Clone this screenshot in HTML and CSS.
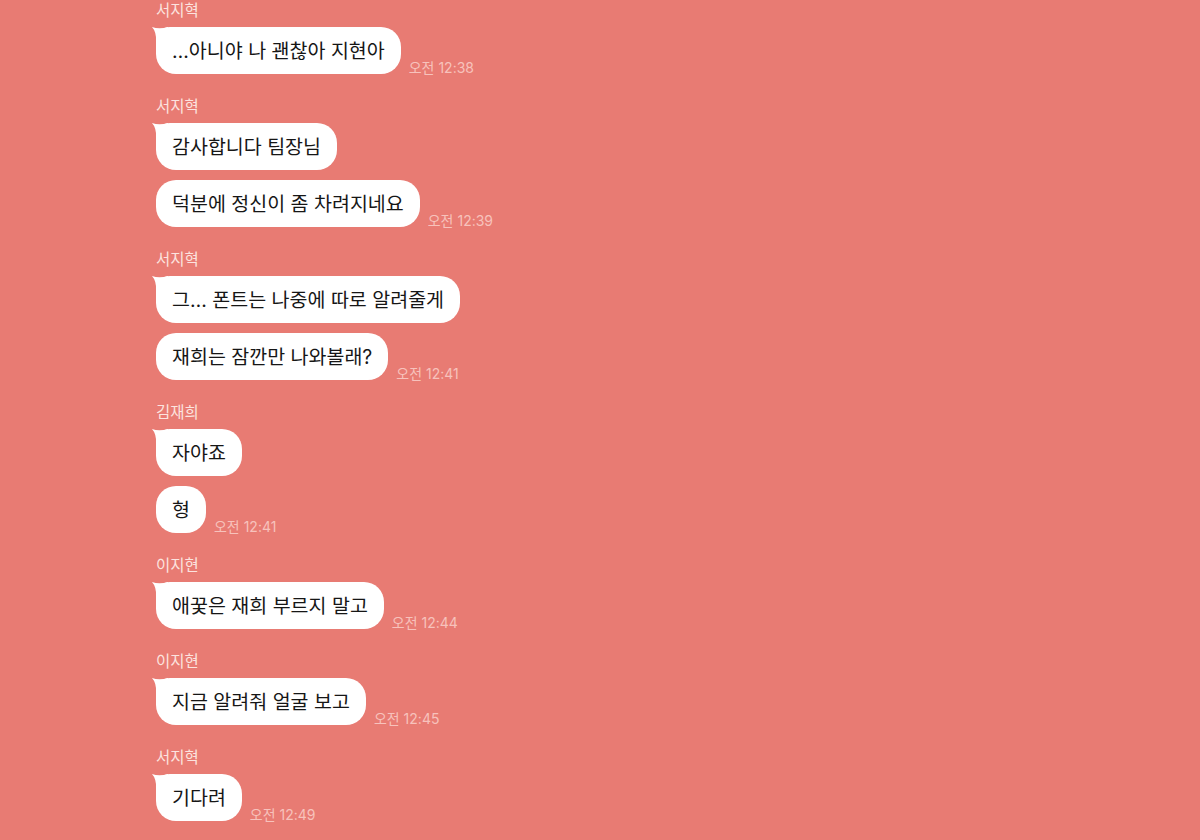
FILE: index.html
```html
<!DOCTYPE html>
<html lang="ko">
<head>
    <meta charset="UTF-8">
    <title>채팅</title>
    <link rel="stylesheet" href="styles.css">
</head>
<body>
    <div class="chat">

        <!-- 서지혁 -->
        <div class="group">
            <div class="name">서지혁</div>
            <div class="row">
                <div class="bubble first">…아니야 나 괜찮아 지현아<svg class="tail" viewBox="0 0 16 14"><path d="M0,0 Q7,2.5 16,0 L16,14 L4,14 Q4.5,5 0,0 Z"/></svg></div>
                <span class="time">오전 12:38</span>
            </div>
        </div>

        <div class="group">
            <div class="name">서지혁</div>
            <div class="row">
                <div class="bubble first">감사합니다 팀장님<svg class="tail" viewBox="0 0 16 14"><path d="M0,0 Q7,2.5 16,0 L16,14 L4,14 Q4.5,5 0,0 Z"/></svg></div>
            </div>
            <div class="row">
                <div class="bubble">덕분에 정신이 좀 차려지네요</div>
                <span class="time">오전 12:39</span>
            </div>
        </div>

        <div class="group">
            <div class="name">서지혁</div>
            <div class="row">
                <div class="bubble first">그… 폰트는 나중에 따로 알려줄게<svg class="tail" viewBox="0 0 16 14"><path d="M0,0 Q7,2.5 16,0 L16,14 L4,14 Q4.5,5 0,0 Z"/></svg></div>
            </div>
            <div class="row">
                <div class="bubble">재희는 잠깐만 나와볼래?</div>
                <span class="time">오전 12:41</span>
            </div>
        </div>

        <!-- 김재희 -->
        <div class="group">
            <div class="name">김재희</div>
            <div class="row">
                <div class="bubble first">자야죠<svg class="tail" viewBox="0 0 16 14"><path d="M0,0 Q7,2.5 16,0 L16,14 L4,14 Q4.5,5 0,0 Z"/></svg></div>
            </div>
            <div class="row">
                <div class="bubble">형</div>
                <span class="time">오전 12:41</span>
            </div>
        </div>

        <!-- 이지현 -->
        <div class="group">
            <div class="name">이지현</div>
            <div class="row">
                <div class="bubble first">애꿎은 재희 부르지 말고<svg class="tail" viewBox="0 0 16 14"><path d="M0,0 Q7,2.5 16,0 L16,14 L4,14 Q4.5,5 0,0 Z"/></svg></div>
                <span class="time">오전 12:44</span>
            </div>
        </div>

        <div class="group">
            <div class="name">이지현</div>
            <div class="row">
                <div class="bubble first">지금 알려줘 얼굴 보고<svg class="tail" viewBox="0 0 16 14"><path d="M0,0 Q7,2.5 16,0 L16,14 L4,14 Q4.5,5 0,0 Z"/></svg></div>
                <span class="time">오전 12:45</span>
            </div>
        </div>

        <div class="group">
            <div class="name">서지혁</div>
            <div class="row">
                <div class="bubble first">기다려<svg class="tail" viewBox="0 0 16 14"><path d="M0,0 Q7,2.5 16,0 L16,14 L4,14 Q4.5,5 0,0 Z"/></svg></div>
                <span class="time">오전 12:49</span>
            </div>
        </div>

    </div>
</body>
</html>
```

FILE: styles.css
```css
* {
    margin: 0;
    padding: 0;
    box-sizing: border-box;
}

body {
    height: 100vh;
    overflow: hidden;
    background: #e87b73;
    font-family: 'Noto Sans CJK KR', sans-serif;
}

/* Chat column */
.chat {
    display: flex;
    flex-direction: column;
    gap: 22px;
    padding-left: 156px;
}

.group {
    display: flex;
    flex-direction: column;
    gap: 10px;
}

/* Sender name */
.name {
    font-size: 15.5px;
    line-height: 18px;
    color: #fce3df;
    margin-bottom: -1px;
}

.row {
    display: flex;
    align-items: flex-end;
    gap: 8px;
}

/* Message bubble */
.bubble {
    position: relative;
    background: #fff;
    color: #161616;
    font-family: 'Inter', 'Noto Sans CJK KR', sans-serif;
    font-size: 19.5px;
    line-height: 24px;
    padding: 12px 16px 11px;
    border-radius: 20px;
    white-space: nowrap;
}

.bubble.first {
    border-top-left-radius: 14px;
}

.tail {
    position: absolute;
    top: 0;
    left: -4px;
    width: 16px;
    height: 14px;
    fill: #fff;
}

/* Timestamp */
.time {
    font-family: 'Inter', 'Noto Sans CJK KR', sans-serif;
    font-size: 14px;
    line-height: 16px;
    color: #f7c2bc;
    margin-bottom: -2px;
}
```
